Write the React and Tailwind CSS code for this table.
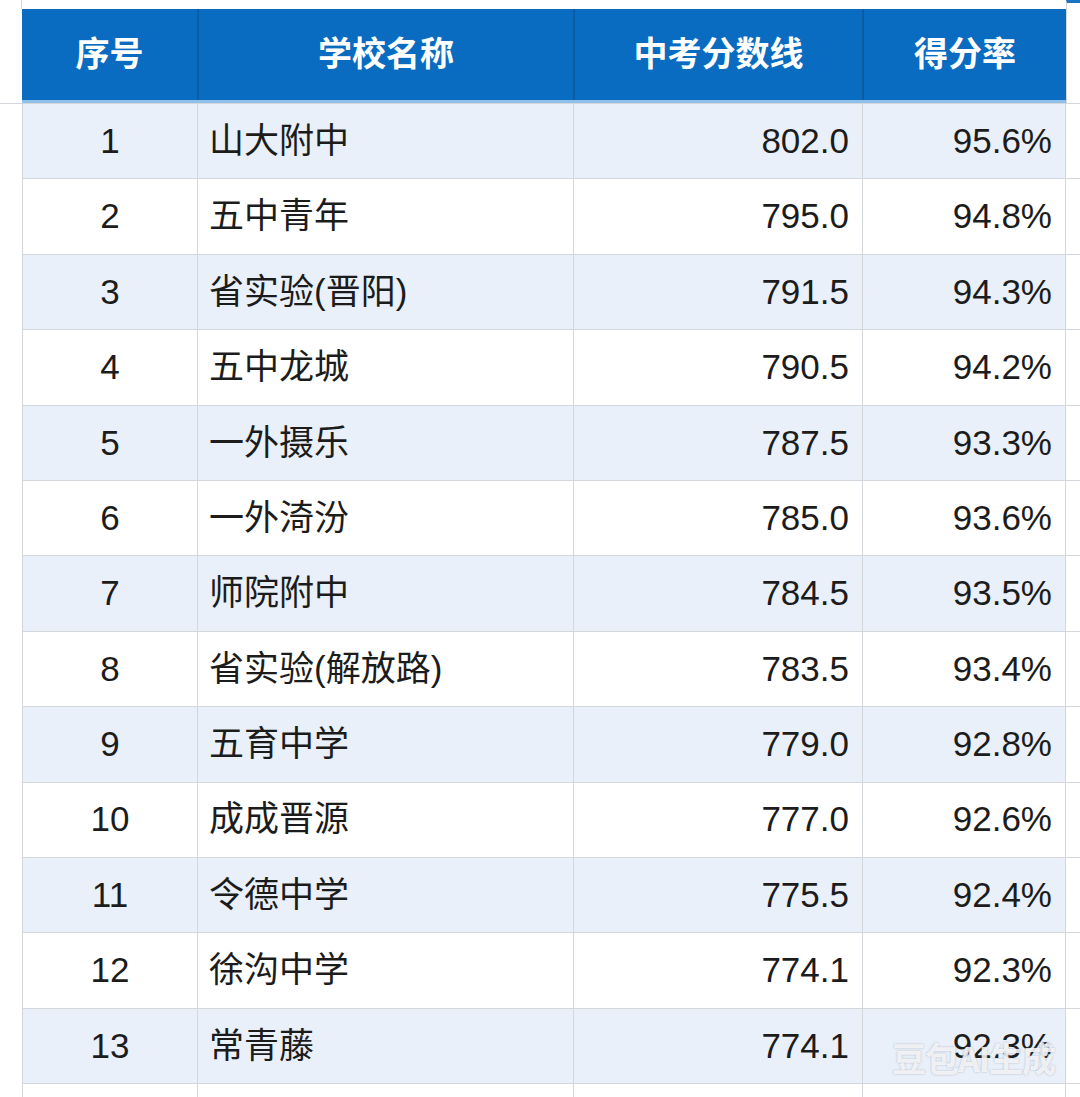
const rows = [
  ["1", "山大附中", "802.0", "95.6%"],
  ["2", "五中青年", "795.0", "94.8%"],
  ["3", "省实验(晋阳)", "791.5", "94.3%"],
  ["4", "五中龙城", "790.5", "94.2%"],
  ["5", "一外摄乐", "787.5", "93.3%"],
  ["6", "一外渏汾", "785.0", "93.6%"],
  ["7", "师院附中", "784.5", "93.5%"],
  ["8", "省实验(解放路)", "783.5", "93.4%"],
  ["9", "五育中学", "779.0", "92.8%"],
  ["10", "成成晋源", "777.0", "92.6%"],
  ["11", "令德中学", "775.5", "92.4%"],
  ["12", "徐沟中学", "774.1", "92.3%"],
  ["13", "常青藤", "774.1", "92.3%"],
];

function Row({ r, i }) {
  const bg = i % 2 === 0 ? "bg-[#e9f0fa]" : "bg-white";
  return (
    <div className="flex h-[75.4px]">
      <div className="w-[22px] shrink-0 bg-white" />
      <div className={`flex shrink-0 ${bg} border-b border-[#d3d6db] text-[35px] text-[#1c1c1c]`}>
        <div className="w-[175px] border-l border-[#d3d6db] flex items-center justify-center">{r[0]}</div>
        <div className="w-[376px] border-l border-[#d3d6db] flex items-center pl-[11px]">{r[1]}</div>
        <div className="w-[289px] border-l border-[#d3d6db] flex items-center justify-end pr-[13px]">{r[2]}</div>
        <div className="w-[204px] border-l border-r border-[#d3d6db] flex items-center justify-end pr-[13px]">{r[3]}</div>
      </div>
      <div className="flex-1 bg-white border-b border-[#d3d6db]" />
    </div>
  );
}

export default function App() {
  return (
    <div
      className="relative w-[1080px] h-[1097px] overflow-hidden bg-white"
      style={{ fontFamily: '"Liberation Sans", "Noto Sans CJK SC", sans-serif' }}
    >
      <div className="flex h-[9px]">
        <div className="w-[22px] border-r border-[#d3d6db]" />
        <div className="w-[1044px]" />
        <div className="flex-1 border-l border-[#d3d6db] border-t-[3px] border-t-[#1a74c4]" />
      </div>
      <div className="flex h-[95px] border-b border-[#d3d6db]">
        <div className="w-[22px] shrink-0" />
        <div className="flex shrink-0 bg-[#0a6cc1] border-b-[3px] border-[#8fc0ea] text-white font-bold text-[34px]">
          <div className="w-[175px] flex items-center justify-center">序号</div>
          <div className="w-[376px] border-l-2 border-[#0a5ca6] flex items-center justify-center">学校名称</div>
          <div className="w-[289px] border-l-2 border-[#0a5ca6] flex items-center justify-center">中考分数线</div>
          <div className="w-[204px] border-l-2 border-[#0a5ca6] flex items-center justify-center">得分率</div>
        </div>
        <div className="flex-1 border-l border-[#d3d6db]" />
      </div>
      {rows.map((r, i) => (
        <Row key={r[0]} r={r} i={i} />
      ))}
      <div className="flex h-[40px]">
        <div className="w-[22px] shrink-0 bg-white" />
        <div className="flex shrink-0 bg-white">
          <div className="w-[175px] border-l border-[#d3d6db]" />
          <div className="w-[376px] border-l border-[#d3d6db]" />
          <div className="w-[289px] border-l border-[#d3d6db]" />
          <div className="w-[204px] border-l border-r border-[#d3d6db]" />
        </div>
      </div>
      <div
        className="absolute left-[892px] top-[1032px] text-[34px] font-bold text-white/80 tracking-[-1px]"
        style={{ textShadow: "0 0 2px rgba(120,130,150,0.6)", fontFamily: '"Noto Sans CJK SC", sans-serif' }}
      >
        豆包AI生成
      </div>
    </div>
  );
}
